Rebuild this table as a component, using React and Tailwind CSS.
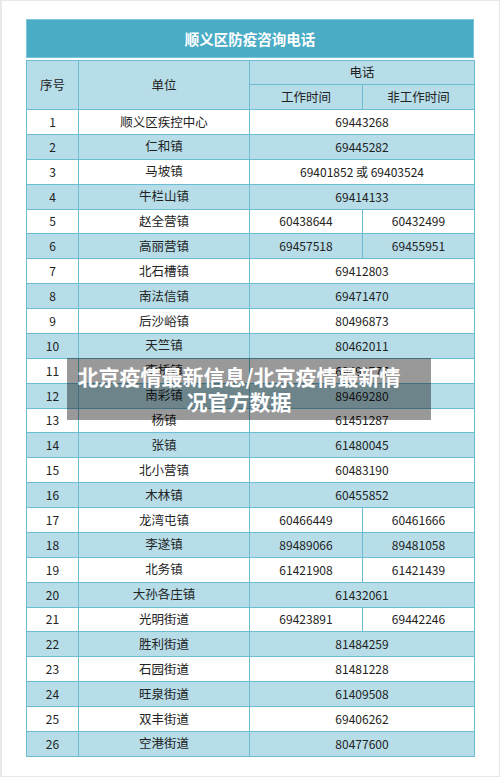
import React from "react";

/* -------------------- DATA -------------------- */

const rows = [
  ["1", "顺义区疾控中心", "69443268"],
  ["2", "仁和镇", "69445282"],
  ["3", "马坡镇", "69401852 或 69403524"],
  ["4", "牛栏山镇", "69414133"],
  ["5", "赵全营镇", "60438644", "60432499"],
  ["6", "高丽营镇", "69457518", "69455951"],
  ["7", "北石槽镇", "69412803"],
  ["8", "南法信镇", "69471470"],
  ["9", "后沙峪镇", "80496873"],
  ["10", "天竺镇", "80462011"],
  ["11", "李桥镇", "69491777"],
  ["12", "南彩镇", "89469280"],
  ["13", "杨镇", "61451287"],
  ["14", "张镇", "61480045"],
  ["15", "北小营镇", "60483190"],
  ["16", "木林镇", "60455852"],
  ["17", "龙湾屯镇", "60466449", "60461666"],
  ["18", "李遂镇", "89489066", "89481058"],
  ["19", "北务镇", "61421908", "61421439"],
  ["20", "大孙各庄镇", "61432061"],
  ["21", "光明街道", "69423891", "69442246"],
  ["22", "胜利街道", "81484259"],
  ["23", "石园街道", "81481228"],
  ["24", "旺泉街道", "61409508"],
  ["25", "双丰街道", "69406262"],
  ["26", "空港街道", "80477600"],
];

const cell = "border border-[#6cbcd2] text-center align-middle p-0";

/* -------------------- COMPONENT -------------------- */

export default function App() {
  return (
    <div
      className="relative w-[500px] h-[777px] bg-white border border-[#e8e8e8] border-l-2 overflow-hidden text-[#222]"
      style={{ fontFamily: '"Noto Sans CJK SC", "Noto Sans", sans-serif' }}
    >
      <div className="ml-[24px] mt-[18px] w-[448px]">
        {/* Title */}
        <div className="h-[39px] bg-[#4bacc6] border border-[#7cc6da] flex items-center justify-center text-white text-[14.5px] font-bold">
          顺义区防疫咨询电话
        </div>

        <table className="mt-[2px] w-[448px] table-fixed border-collapse border border-[#7cc6da]">
          <colgroup>
            <col className="w-[52px]" />
            <col className="w-[171px]" />
            <col className="w-[113px]" />
            <col className="w-[112px]" />
          </colgroup>
          <thead className="bg-[#b7dde8] text-[12.5px]">
            <tr className="h-[24px]">
              <td rowSpan={2} className={cell}>序号</td>
              <td rowSpan={2} className={cell}>单位</td>
              <td colSpan={2} className={cell}>电话</td>
            </tr>
            <tr className="h-[25px]">
              <td className={cell}>工作时间</td>
              <td className={cell}>非工作时间</td>
            </tr>
          </thead>
          <tbody className="text-[12px]">
            {rows.map((r, i) => (
              <tr
                key={r[0]}
                className={`h-[24.88px] ${i % 2 === 1 ? "bg-[#b7dde8]" : "bg-white"}`}
              >
                <td className={cell}>{r[0]}</td>
                <td className={`${cell} text-[12.5px]`}>{r[1]}</td>
                {r.length === 4 ? (
                  <>
                    <td className={cell}>{r[2]}</td>
                    <td className={cell}>{r[3]}</td>
                  </>
                ) : (
                  <td colSpan={2} className={cell}>{r[2]}</td>
                )}
              </tr>
            ))}
          </tbody>
        </table>
      </div>

      {/* Overlay caption */}
      <div className="absolute left-[65px] top-[357px] w-[364px] h-[62px] pr-[20px] bg-black/40 flex flex-col justify-center items-center text-white font-bold text-[21px] leading-[25px]">
        <span>北京疫情最新信息/北京疫情最新情</span>
        <span>况官方数据</span>
      </div>
    </div>
  );
}
